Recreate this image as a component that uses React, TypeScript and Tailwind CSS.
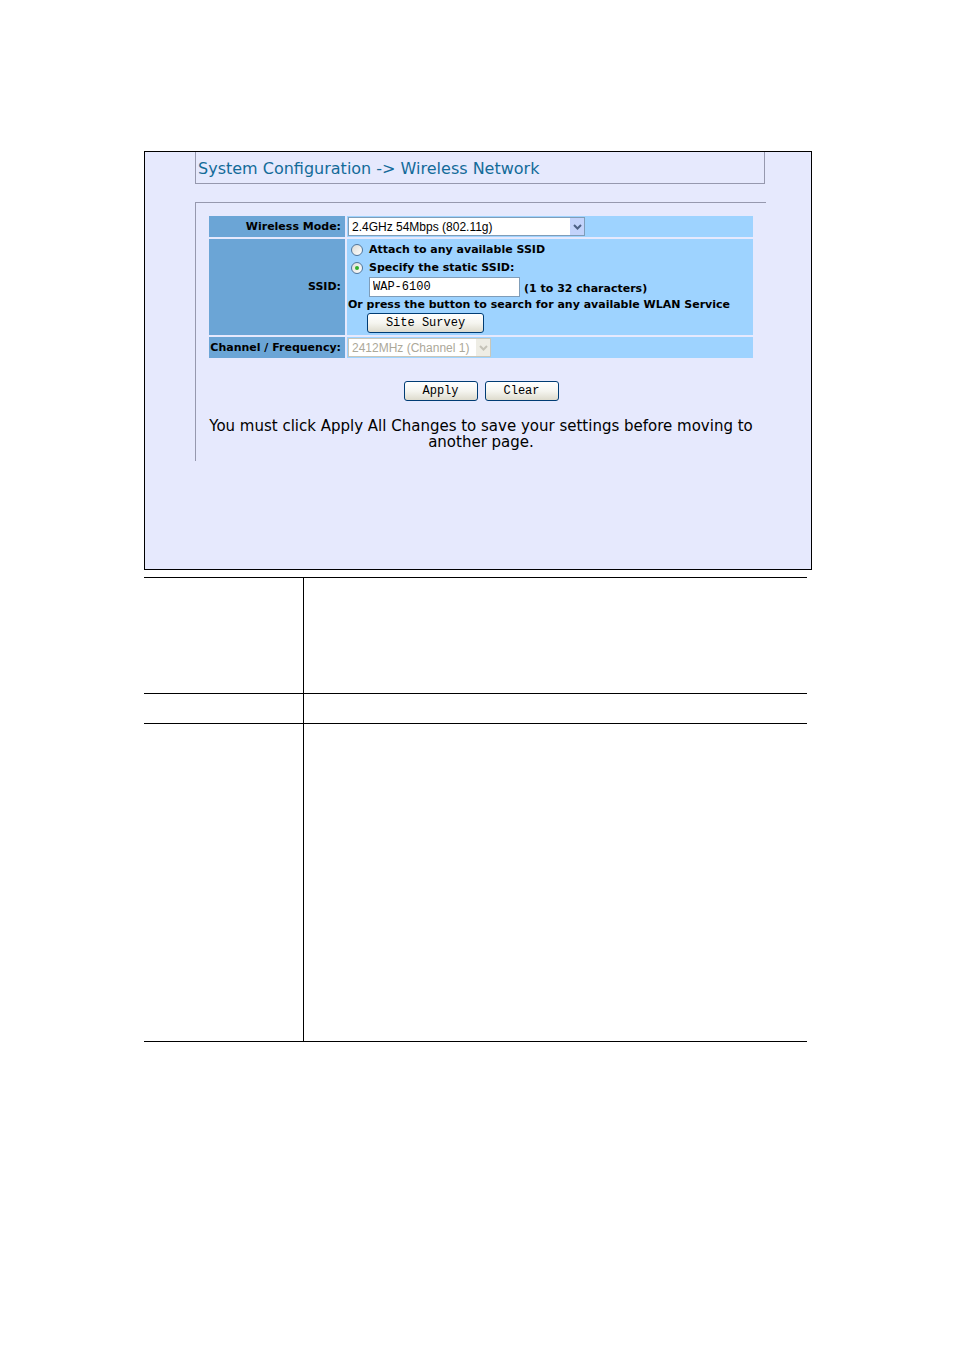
import React, { useState } from 'react';

const ChevronDown = ({ color }: { color: string }) => (
  <svg width="9" height="6" viewBox="0 0 9 6" fill="none" aria-hidden="true">
    <path d="M1 1 L4.5 4.5 L8 1" stroke={color} strokeWidth="2" />
  </svg>
);

const labelCell = 'bg-[#6ba5d6] py-0 pr-1 pl-0 text-right align-middle';
const fieldCell = 'bg-[#9ed3ff] px-px py-0 align-middle';
const radio =
  "grid size-3 shrink-0 appearance-none place-items-center rounded-full border border-[#51769b] bg-gradient-to-br from-[#dcdcd6] to-white before:size-1 before:rounded-full before:content-[''] checked:before:bg-[#2fae2c]";
const button =
  "h-5 rounded-[3px] border border-[#003c74] bg-gradient-to-b from-white via-[#f5f5f0] to-[#dedbcd] font-['Liberation_Mono',monospace] text-xs leading-4 font-normal text-black";

// Blank rows of the description table below the form
const rows = ['h-[116px]', 'h-[30px]', 'h-[318px]'];

const App = () => {
  const [mode, setMode] = useState('attach-static');
  const [ssid, setSsid] = useState('WAP-6100');

  return (
    <div className="bg-white pt-[151px] pr-[142px] pb-[307px] pl-36 font-['DejaVu_Sans',Verdana,sans-serif] text-black">
      <main className="border border-black bg-[#e6e9fd] pr-[45px] pb-[108px] pl-[50px]">
        <header className="mr-px border-x border-b border-[#9698ae] pl-0.5">
          <h1 className="h-[31px] text-base leading-[34px] text-[#136b99]">System Configuration -&gt; Wireless Network</h1>
        </header>

        <form className="mt-[18px] border-t border-l border-[#9698ae] px-[13px] pt-[13px] pb-[11px]" onSubmit={(e) => e.preventDefault()}>
          <table className="w-full table-fixed border-separate border-spacing-0 text-[11px] leading-4 font-bold">
            <tbody>
              <tr className="h-[21px]">
                <td className={labelCell + ' w-[136px]'}>
                  <label htmlFor="mode">Wireless Mode:</label>
                </td>
                <td className="w-0.5 p-0" />
                <td className={fieldCell}>
                  <div className="relative flex w-[237px]">
                    <select id="mode" className="h-[19px] w-full appearance-none border border-[#7f9db9] bg-white pl-[3px] font-['Liberation_Sans',sans-serif] text-xs leading-4 font-normal">
                      <option>2.4GHz 54Mbps (802.11g)</option>
                    </select>
                    <span className="pointer-events-none absolute top-px right-px flex h-[17px] w-[14px] items-center justify-center bg-[#c3d3fb]">
                      <ChevronDown color="#4d6185" />
                    </span>
                  </div>
                </td>
              </tr>
              <tr className="h-0.5"><td colSpan={3} className="p-0" /></tr>
              <tr className="h-24">
                <td className={labelCell}>SSID:</td>
                <td className="p-0" />
                <td className={fieldCell}>
                  <div className="flex h-[18px] items-center gap-1.5 pl-[3px]">
                    <input id="any" type="radio" name="ssid-mode" className={radio} checked={mode === 'attach-any'} onChange={() => setMode('attach-any')} />
                    <label htmlFor="any">Attach to any available SSID</label>
                  </div>
                  <div className="flex h-[18px] items-center gap-1.5 pl-[3px]">
                    <input id="static" type="radio" name="ssid-mode" className={radio} checked={mode === 'attach-static'} onChange={() => setMode('attach-static')} />
                    <label htmlFor="static">Specify the static SSID:</label>
                  </div>
                  <div className="flex items-end gap-1 pl-[21px]">
                    <input
                      id="ssid"
                      className="h-5 w-[151px] border border-[#7f9db9] bg-white px-[3px] font-['Liberation_Mono',monospace] text-xs font-normal"
                      value={ssid}
                      onChange={(e) => setSsid(e.target.value)}
                    />
                    <label htmlFor="ssid">(1 to 32 characters)</label>
                  </div>
                  <p className="h-4 whitespace-nowrap">Or press the button to search for any available WLAN Service</p>
                  <div className="flex pl-[19px]">
                    <button type="button" className={button + ' w-[117px]'}>Site Survey</button>
                  </div>
                </td>
              </tr>
              <tr className="h-0.5"><td colSpan={3} className="p-0" /></tr>
              <tr className="h-[21px]">
                <td className={labelCell + ' whitespace-nowrap'}>
                  <label htmlFor="channel">Channel / Frequency:</label>
                </td>
                <td className="p-0" />
                <td className={fieldCell}>
                  <div className="relative flex w-[143px]">
                    <select id="channel" disabled className="h-[19px] w-full appearance-none border border-[#c9c7ba] bg-white pl-[3px] font-['Liberation_Sans',sans-serif] text-xs leading-4 font-normal text-[#aca899] opacity-100">
                      <option>2412MHz (Channel 1)</option>
                    </select>
                    <span className="pointer-events-none absolute top-px right-px flex h-[17px] w-[14px] items-center justify-center bg-[#eeede5]">
                      <ChevronDown color="#c5c3b8" />
                    </span>
                  </div>
                </td>
              </tr>
            </tbody>
          </table>

          <div className="mt-[23px] flex justify-center gap-[7px]">
            <button type="submit" className={button + ' w-[74px]'}>Apply</button>
            <button type="reset" className={button + ' w-[74px]'}>Clear</button>
          </div>

          <p className="mt-[17px] text-center text-[15px] leading-4">
            You must click Apply All Changes to save your settings before moving to another page.
          </p>
        </form>
      </main>

      <div className="mt-[7px] mr-[5px]">
        <table className="w-full border-collapse border-y border-black">
          <tbody>
            {rows.map((height) => (
              <tr key={height} className={height + ' border-b border-black'}>
                <td className="w-[159px] border-r border-black p-0" />
                <td className="p-0" />
              </tr>
            ))}
          </tbody>
        </table>
      </div>
    </div>
  );
};

export default App;
